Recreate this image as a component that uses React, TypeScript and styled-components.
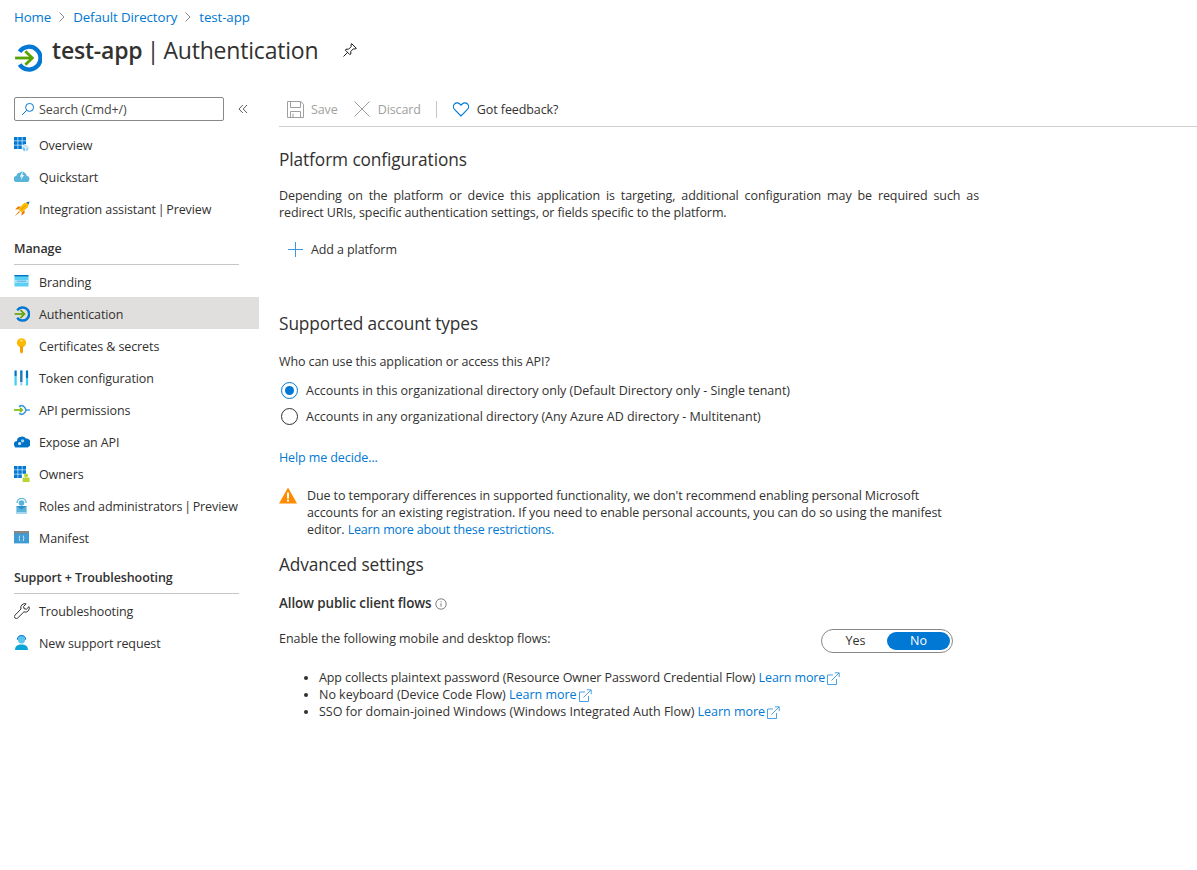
import React from "react";
import styled, { createGlobalStyle } from "styled-components";

const FONT = `"Open Sans", "Noto Sans", "Liberation Sans", sans-serif`;
const LINK = "#0078d4";
const INK = "#323130";

const Global = createGlobalStyle`
  html, body { margin: 0; padding: 0; background: #fff; }
  body { font-family: ${FONT}; font-size: 12.5px; color: ${INK}; letter-spacing: -0.1px; }
  * { box-sizing: border-box; }
`;

const Page = styled.div`
  width: 1197px;
  height: 870px;
  overflow: hidden;
  background: #fff;
`;
const Header = styled.header`
  height: 96px;
  padding: 8px 14px 0;
`;
const Crumbs = styled.nav`
  display: flex;
  align-items: center;
  height: 18px;
  gap: 7px;
  font-size: 13.3px;
`;
const Link = styled.a`
  color: ${LINK};
  text-decoration: none;
`;
const TightLink = styled(Link)`
  letter-spacing: -0.17px;
`;
const TitleRow = styled.div`
  display: flex;
  align-items: flex-start;
  margin-top: 4px;
`;
const TitleLogo = styled.span`
  display: flex;
  margin: 14px 0 0 0;
`;
const Title = styled.h1`
  margin: 2px 0 0 10px;
  font-size: 23px;
  line-height: 36px;
  font-weight: 400;
  color: ${INK};
  letter-spacing: -0.2px;
  white-space: nowrap;
  b { font-weight: 600; }
`;
const TitlePipe = styled.span`
  margin: 0 -1.5px;
`;
const PinWrap = styled.span`
  margin: 12px 0 0 24px;
  display: flex;
`;
const Body = styled.div`
  display: flex;
`;
const Side = styled.aside`
  width: 259px;
  flex: none;
`;
const SearchRow = styled.div`
  display: flex;
  align-items: center;
  padding: 1px 0 7px 14px;
`;
const Search = styled.div`
  width: 210px;
  height: 24px;
  border: 1px solid #8a8886;
  border-radius: 2px;
  display: flex;
  align-items: center;
  gap: 4px;
  padding-left: 6px;
  color: #484644;
`;
const Collapse = styled.span`
  margin-left: 14px;
  display: flex;
`;
const NavItem = styled.div<{ $active?: boolean }>`
  height: 32px;
  padding: 2px 0 0 14px;
  display: flex;
  align-items: center;
  gap: 9px;
  background: ${(p) => (p.$active ? "#e1dfdd" : "transparent")};
  white-space: nowrap;
`;
const Pipe = styled.span`
  margin: 0 -1.4px;
`;
const IconBox = styled.span`
  width: 16px;
  height: 16px;
  display: flex;
  flex: none;
`;
const NavGroup = styled.div`
  margin: 8px 20px 0 14px;
  height: 33px;
  display: flex;
  align-items: center;
  font-weight: 600;
  border-bottom: 1px solid #c8c6c4;
  padding-top: 5px;
  padding-bottom: 5px;
`;
const Main = styled.main`
  flex: 1;
  min-width: 0;
  padding-left: 20px;
`;
const Toolbar = styled.div`
  height: 31px;
  display: flex;
  align-items: center;
  padding: 0 0 4px 8px;
  border-bottom: 1px solid #d2d0ce;
`;
const ToolButton = styled.span<{ $disabled?: boolean; $gap: number; $mr: number }>`
  display: flex;
  align-items: center;
  gap: ${(p) => p.$gap}px;
  margin-right: ${(p) => p.$mr}px;
  color: ${(p) => (p.$disabled ? "#a19f9d" : INK)};
`;
const ToolSep = styled.span`
  width: 1px;
  height: 17px;
  background: #c8c6c4;
  margin-right: 16px;
`;
const Content = styled.div`
  padding-top: 21px;
`;
const H2 = styled.h2<{ $top?: number }>`
  margin: ${(p) => p.$top ?? 0}px 0 0;
  font-size: 17.3px;
  line-height: 24px;
  font-weight: 400;
  color: ${INK};
  letter-spacing: -0.1px;
`;
const Para = styled.p<{ $top: number }>`
  margin: ${(p) => p.$top}px 0 0;
  width: 700px;
  line-height: 17px;
  text-align: justify;
`;
const Line = styled.p<{ $top: number }>`
  margin: ${(p) => p.$top}px 0 0;
  line-height: 17px;
`;
const AddButton = styled.div`
  margin: 20px 0 0 9px;
  height: 17px;
  display: flex;
  align-items: center;
  gap: 8px;
`;
const Radios = styled.div`
  margin-top: 11px;
  display: flex;
  flex-direction: column;
  gap: 8px;
  letter-spacing: -0.02px;
`;
const RadioRow = styled.div`
  display: flex;
  align-items: center;
  height: 18px;
  padding-left: 2px;
  gap: 8px;
`;
const Radio = styled.span<{ $on?: boolean }>`
  width: 17px;
  height: 17px;
  border-radius: 50%;
  border: 1px solid ${(p) => (p.$on ? LINK : INK)};
  display: flex;
  align-items: center;
  justify-content: center;
  &::after {
    content: "";
    width: 9px;
    height: 9px;
    border-radius: 50%;
    background: ${(p) => (p.$on ? LINK : "transparent")};
  }
`;
const Warning = styled.div`
  margin-top: 21px;
  display: flex;
  gap: 10px;
  width: 680px;
  line-height: 17px;
`;
const WarnIcon = styled.span`
  flex: none;
  width: 18px;
  height: 18px;
  display: flex;
`;
const Strong = styled.div`
  margin-top: 18px;
  height: 17px;
  line-height: 17px;
  display: flex;
  align-items: center;
  gap: 4px;
  font-weight: 600;
  font-size: 13.4px;
`;
const FlowRow = styled.div`
  margin-top: 18px;
  display: flex;
  align-items: flex-start;
  width: 674px;
  justify-content: space-between;
  line-height: 17px;
  letter-spacing: -0.05px;
`;
const Toggle = styled.div`
  width: 132px;
  height: 24px;
  border: 1px solid #8a8886;
  border-radius: 12px;
  display: flex;
  align-items: center;
  padding: 2px;
  margin-top: -1px;
`;
const ToggleSide = styled.span<{ $on?: boolean }>`
  flex: 1;
  height: 18px;
  line-height: 18px;
  text-align: center;
  border-radius: 9px;
  color: ${(p) => (p.$on ? "#fff" : INK)};
  background: ${(p) => (p.$on ? LINK : "transparent")};
`;
const Bullets = styled.ul`
  margin: 16px 0 0;
  padding: 0 0 0 40px;
  line-height: 17px;
`;
const Bullet = styled.li<{ $track: number }>`
  letter-spacing: ${(p) => p.$track}px;
`;
const Ext = styled.svg`
  vertical-align: -3px;
  margin-left: 2px;
`;

const Chevron = () => (
  <svg width="8" height="12" viewBox="0 0 8 12" fill="none" stroke="#8a8886" strokeWidth="1">
    <path d="M1.5 1.5 6 6l-4.5 4.5" />
  </svg>
);
const AuthIcon = ({ size }: { size: number }) => (
  <svg width={size} height={size} viewBox="0 0 26 26" fill="none">
    <path d="M5.2 7.2A10.6 10.6 0 1 1 5.2 19" stroke="#0078d4" strokeWidth="4" />
    <path d="M1 13h15" stroke="#57a300" strokeWidth="2.6" />
    <path d="M10.5 6.8 17 13l-6.5 6.2" stroke="#57a300" strokeWidth="2.6" />
  </svg>
);
const Pin = () => (
  <svg width="16" height="16" viewBox="0 0 16 16" fill="none" stroke="#1b1a19" strokeWidth="1">
    <path d="M9.6 1.6 14.4 6.4 13 7 11.4 6.8 8.8 9.4 8.8 12 7.8 12.6 3.4 8.2 4 7.2 6.6 7.2 9.2 4.6 9 3Z" />
    <path d="M5.6 10.4 1.5 14.5" />
  </svg>
);
const SearchIcon = () => (
  <svg width="14" height="14" viewBox="0 0 14 14" fill="none" stroke="#0078d4" strokeWidth="1">
    <circle cx="8.6" cy="5.4" r="4" />
    <path d="M5.6 8.4 1 13" />
  </svg>
);
const DoubleChevron = () => (
  <svg width="10" height="10" viewBox="0 0 10 10" fill="none" stroke="#605e5c" strokeWidth="1">
    <path d="M4.8 1 1 5l3.8 4M9 1 5.2 5 9 9" />
  </svg>
);
const Squares = () => (
  <g fill="#0078d4">
    {[0, 4.2, 8.4].map((y) =>
      [0, 4.2, 8.4].map((x) => <rect key={`${x}-${y}`} x={x} y={y} width="3.6" height="3.6" />)
    )}
  </g>
);
const Overview = () => (
  <svg width="16" height="16" viewBox="0 0 16 16">
    <Squares />
    <path d="M8 8.6 11.5 7 15 8.6V13l-3.5 2L8 13Z" fill="#fff" />
    <path d="M8.6 9 11.5 7.6 14.5 9 11.5 10.4Z" fill="#bfe3f7" />
    <path d="M8.6 9.6 11.2 10.9V14.4L8.6 13Z" fill="#7fc4ee" />
    <path d="M14.5 9.6 11.8 10.9V14.4L14.5 13Z" fill="#a6d7f3" />
  </svg>
);
const Owners = () => (
  <svg width="16" height="16" viewBox="0 0 16 16">
    <Squares />
    <rect x="8" y="8" width="8" height="8" fill="#fff" />
    <circle cx="12" cy="9.4" r="2" fill="#b8d432" />
    <rect x="8.6" y="11.6" width="7" height="4.4" fill="#b8d432" />
  </svg>
);
const Quick = () => (
  <svg width="16" height="16" viewBox="0 0 16 16">
    <path d="M3.2 13.5a3 3 0 0 1-.4-6A3.5 3.5 0 0 1 6 4.2a4 4 0 0 1 5.6.4 3 3 0 0 1 1.4 2.9 3 3 0 0 1-.4 6Z" fill="#59b4d9" transform="translate(-0.4 -.4)" />
    <path d="M8.8 1.8 6 7.8h1.8l-1.2 3.6 3.4-5.4H8.2Z" fill="#fff" />
    <path d="M8.4 3 6.6 7.3h1.8L7.4 10l2-3.4H8.1Z" fill="#e4f4fb" />
  </svg>
);
const Rocket = () => (
  <svg width="16" height="16" viewBox="0 0 16 16">
    <path d="M15.5.5 9.5 2.4 4.4 8.2 7.8 11.6 13.6 6.5Z" fill="#fcb900" />
    <path d="M15.5.5 12.4 1.5 14.5 3.6Z" fill="#0072c6" />
    <path d="M4.4 8.2 1.2 8.6 4 5.4 6.8 5.4ZM7.8 11.6 7.4 14.8 10.6 12 10.6 9.2Z" fill="#ea7a00" />
    <path d="M5 10 .5 15.5 6 11Z" fill="#ea7a00" />
    <path d="M6.5 9.5 11.5 4.5" stroke="#d58a00" strokeWidth=".7" />
  </svg>
);
const Branding = () => (
  <svg width="16" height="16" viewBox="0 0 16 16">
    <rect x=".5" y="1.5" width="14" height="11" fill="#59d0f2" />
    <rect x=".5" y="1" width="14" height="1.4" fill="#0072c6" />
    <rect x=".5" y="6" width="14" height="2.8" fill="#a9e7f9" />
    <path d="M3 6.6 4 8l1-1.4L6 8l1-1.4L8 8l1-1.4L10 8l1-1.4L12 8" fill="none" stroke="#3a96dd" strokeWidth=".6" />
  </svg>
);
const KeyIcon = () => (
  <svg width="16" height="16" viewBox="0 0 16 16">
    <circle cx="7.5" cy="4.8" r="4.6" fill="#fcb900" />
    <rect x="6" y="1.8" width="3" height="1.6" rx=".8" fill="#ffe27a" />
    <path d="M6 8h3v6l-1.5 1.8L6 14Z" fill="#f2a100" />
  </svg>
);
const TokenIcon = () => (
  <svg width="16" height="16" viewBox="0 0 16 16" fill="none" strokeWidth="2.2">
    <path d="M1.6 6v9.5M13 8v7.5" stroke="#3fd0f2" />
    <path d="M7.3 .5v15" stroke="#a7d8f2" />
    <path d="M1.6 .5V6M13 .5V8M7.3 .5V12" stroke="#0072c6" strokeWidth="2.2" />
    <path d="M7.3 3v9" stroke="#7a7a7a" strokeWidth=".6" />
  </svg>
);
const ApiPerm = () => (
  <svg width="16" height="16" viewBox="0 0 16 16" fill="none">
    <path d="M5 4.6a4.2 4.2 0 1 1 0 6.8" stroke="#3a96dd" strokeWidth="1.5" />
    <path d="M0 8h7" stroke="#76b900" strokeWidth="1.6" />
    <path d="M6 5.8 8.4 8 6 10.2" stroke="#76b900" strokeWidth="1.3" />
    <path d="M11.5 8H16" stroke="#3a96dd" strokeWidth="1.4" />
  </svg>
);
const Expose = () => (
  <svg width="16" height="16" viewBox="0 0 16 16">
    <path d="M3.4 13.6a3.3 3.3 0 0 1-.4-6.6A4 4 0 0 1 6 3a4.8 4.8 0 0 1 6 1.6 4.5 4.5 0 0 1 .6 9Z" fill="#0072c6" />
    <circle cx="5.6" cy="9.6" r="1.6" fill="#cfe8fb" />
    <circle cx="8.6" cy="6.8" r="1.6" fill="#a6d7f3" />
    <rect x="1" y="13" width="13" height="1" fill="#7fc4ee" />
  </svg>
);
const Roles = () => (
  <svg width="16" height="16" viewBox="0 0 16 16">
    <path d="M3 5a4.6 4.6 0 0 1 9.2 0" fill="none" stroke="#59b4d9" strokeWidth="1.3" />
    <circle cx="7.5" cy="5" r="2.8" fill="#59b4d9" />
    <rect x="2.4" y="8" width="10.2" height="7.6" fill="#59b4d9" />
    <path d="M2.4 8h10.2L7.5 11.6Z" fill="#2e8fc9" />
    <rect x="2.4" y="14" width="10.2" height="1.6" fill="#a6d7f3" />
  </svg>
);
const Manifest = () => (
  <svg width="16" height="16" viewBox="0 0 16 16">
    <rect y="1" width="15" height="12.4" fill="#3f9bd4" />
    <rect y="1" width="15" height="2.4" fill="#8a8886" />
    <path d="M5.8 5.6 5.2 8.4l.6 2.8M9.2 5.6l.6 2.8-.6 2.8" stroke="#e4f4fb" strokeWidth=".8" fill="none" />
  </svg>
);
const Wrench = () => (
  <svg width="16" height="16" viewBox="0 0 16 16" fill="none" stroke="#323130" strokeWidth="1">
    <path d="M15 3.6 12.4 6.2 10 5.7 9.6 3.4 12.2.9A4 4 0 0 0 7 6L1 12.2A1.9 1.9 0 0 0 3.7 15L9.9 8.9A4 4 0 0 0 15 3.6Z" />
  </svg>
);
const Support = () => (
  <svg width="16" height="16" viewBox="0 0 16 16">
    <circle cx="7.5" cy="4.8" r="3.6" fill="#59c5ee" />
    <path d="M3.3 4.8a4.2 4.2 0 0 1 8.4 0" fill="none" stroke="#0078d4" strokeWidth="1.1" />
    <path d="M1 15c0-3.6 2.6-5.4 6.5-5.4S14 11.4 14 15Z" fill="#0ba5d8" />
  </svg>
);
const SaveIcon = () => (
  <svg width="17" height="17" viewBox="0 0 17 17" fill="none" stroke="#a19f9d" strokeWidth="1">
    <path d="M.5.5h13.2l2.8 2.8v13.2H.5Z" />
    <path d="M3.5.5v6h10v-6M3.5 16.5v-6h10v6M6 12.5v4" />
  </svg>
);
const XIcon = () => (
  <svg width="16" height="16" viewBox="0 0 16 16" fill="none" stroke="#a19f9d" strokeWidth="1">
    <path d="M.5.5l15 15M15.5.5l-15 15" />
  </svg>
);
const Heart = () => (
  <svg width="16" height="15" viewBox="0 0 16 15" fill="none" stroke="#0078d4" strokeWidth="1.1">
    <path d="M8 14 1.5 7.3A3.9 3.9 0 0 1 1.5 2 3.7 3.7 0 0 1 6.8 2L8 3.2 9.2 2a3.7 3.7 0 0 1 5.3 0 3.9 3.9 0 0 1 0 5.3Z" />
  </svg>
);
const Plus = () => (
  <svg width="15" height="15" viewBox="0 0 15 15" fill="none">
    <rect x="7" y="0" width="1" height="15" fill="#3a96dd" />
    <rect x="0" y="7" width="15" height="1" fill="#3a96dd" />
  </svg>
);
const Warn = () => (
  <svg width="18" height="17" viewBox="0 0 18 17">
    <path d="M9 0.5 18 16.5H0Z" fill="#ff8c00" />
    <rect x="8" y="5.5" width="2" height="6" fill="#fff" />
    <rect x="8" y="12.6" width="2" height="2" fill="#fff" />
  </svg>
);
const Info = () => (
  <svg width="12" height="12" viewBox="0 0 12 12" fill="none" stroke="#605e5c" strokeWidth=".8">
    <circle cx="6" cy="6" r="5.2" />
    <path d="M6 5.2v3.4M6 3.2v1" />
  </svg>
);
const External = () => (
  <Ext width="13" height="13" viewBox="0 0 13 13" fill="none" stroke="#3a96dd" strokeWidth=".9">
    <path d="M6 3H.5v9.5H9.5V7" />
    <path d="M4.5 8.5 12 1M7.8.8h4.4v4.4" />
  </Ext>
);

const Integration = (
  <>
    Integration assistant <Pipe>|</Pipe> Preview
  </>
);
const RolesLabel = (
  <>
    Roles and administrators <Pipe>|</Pipe> Preview
  </>
);

type Item = { key: string; label: React.ReactNode; icon: React.ReactNode; active?: boolean };

const top: Item[] = [
  { key: "o", label: "Overview", icon: <Overview /> },
  { key: "q", label: "Quickstart", icon: <Quick /> },
  { key: "i", label: Integration, icon: <Rocket /> },
];
const manage: Item[] = [
  { key: "b", label: "Branding", icon: <Branding /> },
  { key: "a", label: "Authentication", icon: <AuthIcon size={16} />, active: true },
  { key: "c", label: "Certificates & secrets", icon: <KeyIcon /> },
  { key: "t", label: "Token configuration", icon: <TokenIcon /> },
  { key: "p", label: "API permissions", icon: <ApiPerm /> },
  { key: "e", label: "Expose an API", icon: <Expose /> },
  { key: "w", label: "Owners", icon: <Owners /> },
  { key: "r", label: RolesLabel, icon: <Roles /> },
  { key: "m", label: "Manifest", icon: <Manifest /> },
];
const support: Item[] = [
  { key: "s", label: "Troubleshooting", icon: <Wrench /> },
  { key: "n", label: "New support request", icon: <Support /> },
];

const renderItems = (items: Item[]) =>
  items.map((i) => (
    <NavItem key={i.key} $active={i.active}>
      <IconBox>{i.icon}</IconBox>
      <span>{i.label}</span>
    </NavItem>
  ));

export default function App() {
  return (
    <Page>
      <Global />
      <Header>
        <Crumbs>
          <Link>Home</Link>
          <Chevron />
          <Link>Default Directory</Link>
          <Chevron />
          <Link>test-app</Link>
        </Crumbs>
        <TitleRow>
          <TitleLogo>
            <AuthIcon size={28} />
          </TitleLogo>
          <Title>
            <b>test-app</b> <TitlePipe>|</TitlePipe> Authentication
          </Title>
          <PinWrap>
            <Pin />
          </PinWrap>
        </TitleRow>
      </Header>
      <Body>
        <Side>
          <SearchRow>
            <Search>
              <SearchIcon />
              Search (Cmd+/)
            </Search>
            <Collapse>
              <DoubleChevron />
            </Collapse>
          </SearchRow>
          {renderItems(top)}
          <NavGroup>Manage</NavGroup>
          {renderItems(manage)}
          <NavGroup>Support + Troubleshooting</NavGroup>
          {renderItems(support)}
        </Side>
        <Main>
          <Toolbar>
            <ToolButton $disabled $gap={7} $mr={16}>
              <SaveIcon />
              Save
            </ToolButton>
            <ToolButton $disabled $gap={8} $mr={15}>
              <XIcon />
              Discard
            </ToolButton>
            <ToolSep />
            <ToolButton $gap={8} $mr={0}>
              <Heart />
              Got feedback?
            </ToolButton>
          </Toolbar>
          <Content>
            <H2>Platform configurations</H2>
            <Para $top={15}>
              Depending on the platform or device this application is targeting, additional configuration may be
              required such as redirect URIs, specific authentication settings, or fields specific to the platform.
            </Para>
            <AddButton>
              <Plus />
              Add a platform
            </AddButton>
            <H2 $top={54}>Supported account types</H2>
            <Line $top={17}>Who can use this application or access this API?</Line>
            <Radios>
              <RadioRow>
                <Radio $on />
                Accounts in this organizational directory only (Default Directory only - Single tenant)
              </RadioRow>
              <RadioRow>
                <Radio />
                Accounts in any organizational directory (Any Azure AD directory - Multitenant)
              </RadioRow>
            </Radios>
            <Line $top={24}>
              <Link>Help me decide...</Link>
            </Line>
            <Warning>
              <WarnIcon>
                <Warn />
              </WarnIcon>
              <div>
                Due to temporary differences in supported functionality, we don't recommend enabling personal Microsoft
                accounts for an existing registration. If you need to enable personal accounts, you can do so using the
                manifest editor. <TightLink>Learn more about these restrictions.</TightLink>
              </div>
            </Warning>
            <H2 $top={15}>Advanced settings</H2>
            <Strong>
              Allow public client flows
              <Info />
            </Strong>
            <FlowRow>
              Enable the following mobile and desktop flows:
              <Toggle>
                <ToggleSide>Yes</ToggleSide>
                <ToggleSide $on>No</ToggleSide>
              </Toggle>
            </FlowRow>
            <Bullets>
              <Bullet $track={-0.1}>
                App collects plaintext password (Resource Owner Password Credential Flow) <Link>Learn more</Link>
                <External />
              </Bullet>
              <Bullet $track={-0.02}>
                No keyboard (Device Code Flow) <Link>Learn more</Link>
                <External />
              </Bullet>
              <Bullet $track={-0.02}>
                SSO for domain-joined Windows (Windows Integrated Auth Flow) <Link>Learn more</Link>
                <External />
              </Bullet>
            </Bullets>
          </Content>
        </Main>
      </Body>
    </Page>
  );
}
